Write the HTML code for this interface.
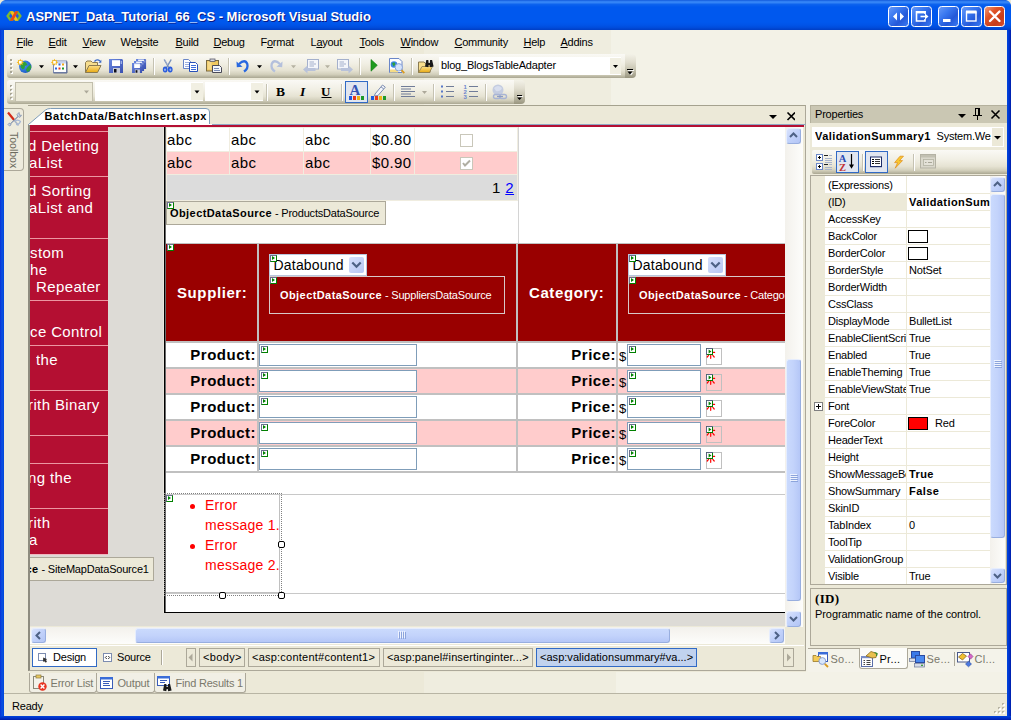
<!DOCTYPE html>
<html>
<head>
<meta charset="utf-8">
<title>VS</title>
<style>
*{box-sizing:border-box;margin:0;padding:0}
html,body{width:1011px;height:720px;overflow:hidden;background:#ECE9D8;font-family:"Liberation Sans",sans-serif;font-size:11px;color:#000;letter-spacing:-0.2px}
.abs{position:absolute}
#win{position:absolute;left:0;top:0;width:1011px;height:720px;background:#ECE9D8;overflow:hidden}
/* window chrome */
#title{left:0;top:0;width:1011px;height:30px;background:linear-gradient(#0A50D4 0px,#2E7CF2 1px,#3484F6 2.5px,#0C62EE 4.5px,#0058EE 7px,#0058EE 22px,#0054E8 25px,#004CDC 27.5px,#003EC4 30px)}
#title .txt{left:26px;top:9px;color:#fff;font-weight:bold;font-size:13px;letter-spacing:0px;text-shadow:1px 1px 0 #0A1883;white-space:nowrap}
#bl{left:0;top:30px;width:4px;height:690px;background:linear-gradient(90deg,#0831D9,#0A50E0 50%,#0046DD)}
#br{left:1007px;top:30px;width:4px;height:690px;background:linear-gradient(90deg,#0046DD,#0035D0 50%,#001DA8)}
#bb{left:0;top:716px;width:1011px;height:4px;background:linear-gradient(#0046DD,#0030C8 50%,#001DA8)}
.tb{position:absolute;top:6px;width:21px;height:21px;border:1px solid #fff;border-radius:3px;background:linear-gradient(135deg,#5C8DF0 0%,#2B62E0 40%,#2257D6 60%,#3C78EE 100%)}
.tb.close{background:linear-gradient(135deg,#EA8A6C 0%,#D9502E 40%,#C83A1A 70%,#D9502E 100%)}
/* menu */
#menu{left:4px;top:30px;width:1003px;height:24px;background:linear-gradient(90deg,#ECE9D8 0,#ECE9D8 420px,#EFEDDF 420px,#EFEDDF 607px,#F3F2E7 607px,#F3F2E7 100%)}
#menu span{position:absolute;top:6px;font-size:11px;white-space:nowrap;letter-spacing:-0.25px;margin-left:0.5px}
#menu u{text-decoration:underline}
/* toolbars */
#tbarea{left:4px;top:54px;width:1003px;height:52px;background:linear-gradient(90deg,#ECE9D8 0,#ECE9D8 420px,#EFEDDF 420px,#EFEDDF 607px,#F3F2E7 607px,#F3F2E7 100%)}
.toolbar{position:absolute;height:24px;border-radius:3px 0 0 3px;background:linear-gradient(#FAF9F5 0,#F1EFE4 40%,#E6E3D3 68%,#D2CFBB 85%,#B5B29D 96%,#A8A590 100%)}
.ovf{position:absolute;top:0;width:11px;height:24px;border-radius:0 4px 4px 0;background:linear-gradient(#F3F2E8 0,#E0DDCE 35%,#C6C3B0 65%,#98957F 100%)}
.grip{position:absolute;left:3px;top:5px;width:3px;height:15px;background:repeating-linear-gradient(#fff 0 1px,#A6A394 1px 3px,transparent 3px 4px)}
.sep{position:absolute;top:4px;width:2px;height:17px;border-left:1px solid #C5C2B2;border-right:1px solid #fff}

/* doc frame */
#docwrap{left:4px;top:106px;width:802px;height:566px;background:#ECE9D8}
#gap{left:806px;top:105px;width:4px;height:567px;background:#F3F2E7}
#toolbox{left:4px;top:108px;width:20px;height:63px;background:#EEEBDD;border:1px solid #ACA899;border-left:none;border-radius:0 4px 4px 0}
#toolbox .t{position:absolute;left:3.5px;top:23px;font-size:10.5px;color:#6D6B5F;writing-mode:vertical-rl;letter-spacing:0px}
#tabstrip{left:28px;top:105px;width:778px;height:20px;background:#ECE9D8;border-top:1px solid #A5A28F;border-right:1px solid #ACA899;border-bottom:1px solid #8FA8C4}
#docframe{left:28px;top:124px;width:778px;height:547px;border:1px solid #ACA899;border-top-color:#8FA8C4;border-left:2px solid #8E8C7F;background:#ECE9D8}
#doc{left:30px;top:125px;width:755px;height:501px;background:#DDDBD6;overflow:hidden}
#sc{left:-30px;top:-125px;width:1011px;height:720px}
.vd{font-family:"Liberation Sans",sans-serif}
#side{left:30px;top:125px;width:78px;height:429px;background:#B40F32}
.it{position:absolute;color:#fff;font-size:15px;letter-spacing:0.38px;line-height:17px;white-space:nowrap;overflow:hidden}
.ln{position:absolute;left:30px;width:78px;height:1px;background:#EC96A2}
#page{left:164px;top:125px;width:621px;height:488px;background:#fff;border-left:1px solid #000;border-bottom:1px solid #000;box-shadow:inset 1px 0 0 #6A6A6A,-1px 0 0 #EAE7E0}

.vt{font-size:15px;letter-spacing:0.4px;white-space:nowrap;line-height:20px}
.hd{font-size:15px;letter-spacing:0.6px;font-weight:bold;color:#fff;white-space:nowrap;line-height:20px}
.lb{font-size:15px;letter-spacing:0.5px;font-weight:bold;color:#000;white-space:nowrap;line-height:20px;text-align:right}
.ods{background:#ECE9D8;border:1px solid #ACA899;font-size:11px;white-space:nowrap;overflow:hidden;letter-spacing:-0.2px}
.odsr{border:1px solid #D8C8C8;font-size:11px;white-space:nowrap;color:#fff;overflow:hidden;letter-spacing:-0.2px}
.txb{background:#fff;border:1px solid #7F9DB9}
.ddb{position:absolute;left:79px;top:2px;width:15px;height:16px;background:linear-gradient(135deg,#D6DFFB,#B7C7F3);border-radius:2px}
.glyph{position:absolute;width:7px;height:7px;background:#fff;border:1px solid;border-color:#6C7090 #008000 #008000 #6C7090}
.glyph:after{content:"";position:absolute;left:1px;top:0px;border-left:3px solid #008000;border-top:2.5px solid transparent;border-bottom:2.5px solid transparent}

/* scrollbars */
.vtrack{position:absolute;background:linear-gradient(90deg,#F3F1EC,#FDFDFB)}
.htrack{position:absolute;background:linear-gradient(#F3F1EC,#FDFDFB)}
.sbtn{position:absolute;width:15px;height:15px;border-radius:3px;border:1px solid #fff;background:linear-gradient(135deg,#D9E2FC 0%,#C3D3FB 45%,#B3C5F5 100%);box-shadow:1px 1px 0 #9DB3E8 inset,0 0 0 0 #000}
.sbtn{box-shadow:none;border-color:#E6EDFD #98AEDF #98AEDF #E6EDFD}
.sbtn svg{position:absolute;left:0;top:0}
.thumb{position:absolute;border-radius:3px;border:1px solid;border-color:#E6EDFD #98AEDF #98AEDF #E6EDFD;background:#C3D3FB}
.thumb.v{background:linear-gradient(90deg,#CADAFD 0%,#C3D3FB 50%,#B5C7F7 100%)}
.thumb.h{background:linear-gradient(#CADAFD 0%,#C3D3FB 50%,#B5C7F7 100%)}
/* design/source bar */
#dsbar{left:30px;top:645px;width:774px;height:25px;background:#ECE9D8;border-top:1px solid #fff}
.pbtn{position:absolute;top:648px;height:19px;border:1px solid #ACA899;font-size:11px;white-space:nowrap;padding:2px 0 0 3px;background:#ECE9D8}
.pbtn.sel{background:#C1D2EE;border-color:#316AC5}
/* bottom tabs */
#btabs{left:4px;top:672px;width:1003px;height:22px;background:linear-gradient(90deg,#ECE9D8 0,#ECE9D8 420px,#EFEDDF 420px,#EFEDDF 612px,#F3F2E7 612px,#F3F2E7 100%)}
.btab{position:absolute;top:673px;height:20px;border:1px solid #ACA899;border-top:none;border-radius:0 0 3px 3px;background:#F1EFE5;color:#7A786B;font-size:11px;white-space:nowrap}
.btab span{position:absolute;left:21px;top:4px}
#status{left:4px;top:693px;width:1003px;height:23px;background:#ECE9D8;border-top:1px solid #B8B5A4}
#status .t{position:absolute;left:8px;top:6px;font-size:11px}

/* properties */
#props{left:810px;top:105px;width:197px;height:542px;background:#ECE9D8}
#ptitle{left:810px;top:105px;width:197px;height:18px;background:#CAC7B3;border-top:1px solid #B4B19D;border-left:1px solid #B4B19D;font-size:11px}
#ptitle span{position:absolute;left:4px;top:2px}
#pcombo{left:812px;top:127px;width:192px;height:20px;background:#fff;overflow:hidden;white-space:nowrap;font-size:11px}
#pcombo .t{position:absolute;left:3px;top:3px;width:176px;overflow:hidden;display:block}
#pcombo .b{position:absolute;left:180px;top:1px;width:12px;height:18px;background:linear-gradient(90deg,#ECE9D8 0 11px,#fff 11px)}
#ptool{left:812px;top:150px;width:195px;height:24px;border-radius:2px 0 0 2px;background:linear-gradient(#FAF9F5 0,#F1EFE4 40%,#E6E3D3 68%,#D2CFBB 85%,#B5B29D 96%,#A8A590 100%)}
#pgridb{left:810px;top:175px;width:197px;height:410px;border:1px solid #ACA899;background:#ECE9D8}
#pgrid{left:812px;top:176px;width:193px;height:408px;background:#fff;overflow:hidden}
#pgrid .gut{position:absolute;left:0;top:0;width:13px;height:408px;background:#ECE9D8}
.pr{position:absolute;left:13px;width:166px;height:17px;border-bottom:1px solid #ECE9D8;font-size:11px;white-space:nowrap;letter-spacing:-0.2px}
.pr b,#pcombo b,.ods b,.odsr b{letter-spacing:0.42px}
.pr .n{position:absolute;left:0;top:0;width:81px;height:16px;overflow:hidden;padding:2px 0 0 3px}
.pr .v{position:absolute;left:82px;top:0;width:84px;height:16px;overflow:hidden;padding:2px 0 0 2px}
.pr .sw{position:absolute;left:83px;top:2px;width:20px;height:13px;border:1px solid #000}
#pvl{position:absolute;left:94px;top:0;width:1px;height:408px;background:#ECE9D8}
#pdesc{left:810px;top:588px;width:197px;height:58px;letter-spacing:-0.08px;background:#ECE9D8;border:1px solid #ACA899;font-size:11px}
#ptabs{left:808px;top:648px;width:199px;height:24px;background:#F4F3EA;border-top:1px solid #ACA899}
.ptab{position:absolute;top:648px;height:21px;font-size:11px;color:#7A786B;white-space:nowrap;letter-spacing:0.25px}
.ptab span{position:absolute;left:17.5px;top:5px}
.ptab.act span{left:19.5px;top:5px}
.ptab.act{background:#FCFCF9;border:1px solid #ACA899;border-top:none;border-radius:0 0 3px 3px;color:#000;top:648px;height:21px}
/* doc tab */
#dtab{left:30px;top:108px;width:181px;height:17px}
#dtab .t{position:absolute;left:14.5px;top:2px;font-size:11px;font-weight:bold;white-space:nowrap;letter-spacing:0.63px}
</style>
</head>
<body>
<div id="win">

  <div id="title" class="abs">
    <!--VSICON-->
    <div class="txt abs">ASPNET_Data_Tutorial_66_CS - Microsoft Visual Studio</div>
    <!--TBTNS-->
  </div>
  <div id="menu" class="abs"><span style="left:12px"><u>F</u>ile</span><span style="left:44px"><u>E</u>dit</span><span style="left:78px"><u>V</u>iew</span><span style="left:116px">We<u>b</u>site</span><span style="left:171px"><u>B</u>uild</span><span style="left:209px"><u>D</u>ebug</span><span style="left:256px">F<u>o</u>rmat</span><span style="left:306px">L<u>a</u>yout</span><span style="left:355px"><u>T</u>ools</span><span style="left:396px"><u>W</u>indow</span><span style="left:450px"><u>C</u>ommunity</span><span style="left:519px"><u>H</u>elp</span><span style="left:556px"><u>A</u>ddins</span></div>
  <div id="tbarea" class="abs">
    <div class="toolbar" style="left:3px;top:0;width:618px"></div>
    <div class="ovf" style="left:621px;top:0"></div>
    <div class="toolbar" style="left:3px;top:26px;width:507px"></div>
    <div class="ovf" style="left:510px;top:26px"></div>
  </div>
<svg class="abs" style="left:0;top:54px" width="640" height="52" viewBox="0 54 640 52" shape-rendering="auto">
<defs>
<linearGradient id="gFold" x1="0" y1="0" x2="0" y2="1"><stop offset="0" stop-color="#FBE08A"/><stop offset="1" stop-color="#E8A912"/></linearGradient>
<linearGradient id="gBlue" x1="0" y1="0" x2="1" y2="1"><stop offset="0" stop-color="#6A88E0"/><stop offset="1" stop-color="#3A50B0"/></linearGradient>
<radialGradient id="gGlobe" cx="0.35" cy="0.35" r="0.8"><stop offset="0" stop-color="#4C9AF5"/><stop offset="1" stop-color="#1450C0"/></radialGradient>
<g id="star"><path d="M3.5 0 L4.4 1.6 L6 0.9 L5.6 2.6 L7.2 3.5 L5.6 4.4 L6 6.1 L4.4 5.4 L3.5 7 L2.6 5.4 L1 6.1 L1.4 4.4 L-0.2 3.5 L1.4 2.6 L1 0.9 L2.6 1.6 Z" fill="#F5B81C"/><rect x="2.2" y="2.2" width="2.6" height="2.6" fill="#fff"/></g>
<g id="dd"><path d="M0 0 L5 0 L2.5 3 Z"/></g>
<g id="floppy"><path d="M0 0 L13 0 L14 1 L14 14 L0 14 Z" fill="url(#gBlue)"/><rect x="3" y="1" width="8" height="6" fill="#fff"/><rect x="3" y="1" width="8" height="1" fill="#DCE4F8"/><rect x="4" y="9" width="7" height="5" fill="#C8CCD8"/><rect x="5" y="10" width="2.5" height="3.5" fill="#101018"/><rect x="11.7" y="2" width="1.2" height="3" fill="#A8B8E8"/></g>
</defs>
<!-- grip -->
<g fill="#A9A697"><rect x="10" y="59" width="2" height="2"/><rect x="10" y="63" width="2" height="2"/><rect x="10" y="67" width="2" height="2"/><rect x="10" y="71" width="2" height="2"/></g>
<g fill="#fff"><rect x="11" y="60" width="2" height="2"/><rect x="11" y="64" width="2" height="2"/><rect x="11" y="68" width="2" height="2"/><rect x="11" y="72" width="2" height="2"/></g>
<g fill="#A9A697"><rect x="10" y="59" width="2" height="2"/><rect x="10" y="63" width="2" height="2"/><rect x="10" y="67" width="2" height="2"/><rect x="10" y="71" width="2" height="2"/></g>
<!-- new website: globe+star -->
<circle cx="25.3" cy="66.8" r="6.2" fill="url(#gGlobe)"/>
<path d="M21 63 Q24 61 26 62.5 L27.5 65 L25 66 L24.5 68.5 L22.5 69.5 L20.5 67 Z M27.5 67 L30.5 64.5 L31.3 67.5 L29.5 71 L27 72 L26 69.5 Z" fill="#2FA03C"/>
<use href="#star" x="16.8" y="58.8"/>
<use href="#dd" x="39" y="65.3" fill="#000"/>
<!-- add item -->
<rect x="53.5" y="61" width="13" height="11.5" fill="#FDFDFE" stroke="#7D8CB4" stroke-width="1"/>
<rect x="54" y="61.5" width="12" height="2" fill="#C9D5F0"/>
<path d="M53.5 73 L67 73 L67 61.5" stroke="#5A6890" stroke-width="1" fill="none"/>
<rect x="58.5" y="63.5" width="2" height="2" fill="#2A66E0"/><rect x="62" y="63.5" width="2" height="2" fill="#F0A818"/>
<rect x="55" y="67.5" width="2" height="2" fill="#2A66E0"/><rect x="58.5" y="67.5" width="2" height="2" fill="#E8381C"/><rect x="62" y="67.5" width="2" height="2" fill="#1E9A2A"/>
<use href="#star" x="51" y="58.8"/>
<use href="#dd" x="73" y="65.3" fill="#000"/>
<!-- open folder -->
<path d="M85.5 72.5 L85.5 62.5 L87 61 L91 61 L92.5 62.5 L97.5 62.5 L97.5 65" fill="#F7DE8E" stroke="#8A7A50" stroke-width="1"/>
<path d="M85.5 72.5 L89 65.5 L101 65.5 L97.5 72.5 Z" fill="url(#gFold)" stroke="#8A7A50" stroke-width="1"/>
<path d="M94.5 61.5 Q97 58.5 100 61" stroke="#3A6AC8" stroke-width="1.3" fill="none"/><path d="M98.5 62.8 L101.3 62.8 L101.3 59.8 Z" fill="#3A6AC8"/>
<!-- save -->
<use href="#floppy" x="109" y="59"/>
<!-- save all -->
<g transform="translate(136,59) scale(0.72)"><use href="#floppy"/></g>
<g transform="translate(134,61) scale(0.72)"><use href="#floppy"/></g>
<g transform="translate(132,63) scale(0.72)"><use href="#floppy"/></g>
<!-- sep -->
<g id="s1"><rect x="153" y="58" width="1" height="17" fill="#C5C2B2"/><rect x="154" y="58" width="1" height="17" fill="#fff"/></g>
<!-- scissors -->
<path d="M164.2 59.5 L168.8 67.5 M171.2 59.5 L166.6 67.5" stroke="#7A92BC" stroke-width="1.5" fill="none"/>
<path d="M164.6 59.5 L167.7 65" stroke="#A8B8D4" stroke-width="0.8" fill="none"/>
<ellipse cx="165.2" cy="69.6" rx="2.4" ry="3" fill="#2A5CDC"/><ellipse cx="165" cy="69.8" rx="0.9" ry="1.3" fill="#9CB8F0"/>
<ellipse cx="170.2" cy="69.6" rx="2.4" ry="3" fill="#2A5CDC"/><ellipse cx="170.4" cy="69.8" rx="0.9" ry="1.3" fill="#9CB8F0"/>
<!-- copy -->
<path d="M183.5 59.5 L188.5 59.5 L190.5 61.5 L190.5 68.5 L183.5 68.5 Z" fill="#fff" stroke="#6A86C8" stroke-width="1"/>
<path d="M185 62.5 L189 62.5 M185 64.5 L189 64.5 M185 66.5 L189 66.5" stroke="#9CB0E0" stroke-width="1"/>
<path d="M189.5 62.5 L195.5 62.5 L197.5 64.5 L197.5 71.5 L189.5 71.5 Z" fill="#fff" stroke="#2850B8" stroke-width="1"/>
<path d="M191 65.5 L196 65.5 M191 67.5 L196 67.5 M191 69.5 L196 69.5" stroke="#3A6AD8" stroke-width="1"/>
<!-- paste -->
<rect x="206.5" y="60.5" width="12" height="10.5" fill="#F0C860" stroke="#7A6A40" stroke-width="1"/><rect x="207.5" y="61.5" width="4" height="8" fill="#F8E098" opacity="0.7"/>
<rect x="210" y="59" width="5" height="2.5" fill="#D8D8E0" stroke="#5A5A68" stroke-width="0.8"/>
<path d="M212.5 65.5 L219.5 65.5 L221.5 67.5 L221.5 72.5 L212.5 72.5 Z" fill="#F4F6FA" stroke="#4A4A58" stroke-width="1"/>
<path d="M214 68.5 L219 68.5 M214 70.5 L220 70.5" stroke="#7A8CB8" stroke-width="1"/>
<use href="#s1" x="75"/>
<!-- undo -->
<path d="M239 64 Q245 58.5 247.3 64 Q248.5 68.5 244 71.5" stroke="#2868E0" stroke-width="2.3" fill="none"/>
<path d="M236.5 61.5 L236.8 67.2 L242.5 66.8 Z" fill="#2868E0"/>
<use href="#dd" x="257" y="65.3" fill="#000"/>
<!-- redo (disabled) -->
<path d="M280 64 Q274 58.5 271.7 64 Q270.5 68.5 275 71.5" stroke="#B4C0DC" stroke-width="2.3" fill="none"/>
<path d="M282.5 61.5 L282.2 67.2 L276.5 66.8 Z" fill="#B4C0DC"/>
<use href="#dd" x="291" y="65.3" fill="#B5B2A2"/>
<!-- nav back -->
<rect x="307.5" y="59.5" width="11" height="9.5" fill="#F4F6FA" stroke="#A4B0CC" stroke-width="1"/>
<path d="M309.5 62 L314 62 M309.5 64 L316 64 M309.5 66 L314 66" stroke="#A4B0CC" stroke-width="1"/>
<path d="M303 69.5 L307.5 65.5 L307.5 68 L315.5 68 L315.5 71 L307.5 71 L307.5 73.5 Z" fill="#B8C2DA"/>
<use href="#dd" x="325" y="65.3" fill="#B5B2A2"/>
<!-- nav fwd -->
<rect x="337.5" y="59.5" width="11" height="9.5" fill="#F4F6FA" stroke="#A4B0CC" stroke-width="1"/>
<path d="M339.5 62 L344 62 M339.5 64 L346 64 M339.5 66 L344 66" stroke="#A4B0CC" stroke-width="1"/>
<path d="M353 69.5 L348.5 65.5 L348.5 68 L341 68 L341 71 L348.5 71 L348.5 73.5 Z" fill="#B8C2DA"/>
<use href="#s1" x="206"/>
<!-- start -->
<path d="M371 59.5 L377.3 65.3 L371 71.2 Z" fill="#1E9A1E" stroke="#0E7A12" stroke-width="0.6"/>
<!-- view in browser -->
<path d="M389.5 58.5 L399 58.5 L402 61.5 L402 72.5 L389.5 72.5 Z" fill="#FDFDFE" stroke="#6A86C8" stroke-width="1"/>
<rect x="390" y="69.5" width="8" height="3" fill="#F6DC86"/>
<circle cx="394" cy="64.5" r="3.3" fill="#3A86E8"/><path d="M392 63 L394.5 62.3 L395.5 64.5 L393.5 66.5 Z" fill="#2FA03C"/>
<circle cx="398.8" cy="67.3" r="3.7" fill="#D4E2FA" stroke="#8AA4D8" stroke-width="1"/>
<path d="M401.5 70.2 L404.3 73.2" stroke="#D89A20" stroke-width="1.8"/>
<use href="#s1" x="258"/>
<!-- find in files -->
<path d="M418.5 72.5 L418.5 62 L424 62 L425.5 63.5 L430 63.5 L430 72.5 Z" fill="#F7DE8E" stroke="#8A7A50" stroke-width="1"/>
<path d="M418.5 72.5 L422 66.5 L432.5 66.5 L429.5 72.5 Z" fill="url(#gFold)" stroke="#8A7A50" stroke-width="0.8"/>
<path d="M425 66.5 L426.3 60 L428.3 60 L428.6 63 L429.8 63 L430.1 60 L432.1 60 L433.6 66.5 L430.2 67.3 L429.7 65 L428.7 65 L428.2 67.3 Z" fill="#181818"/>
<!-- combo -->
<rect x="439" y="57" width="182" height="18" fill="#fff"/>
<rect x="610" y="58" width="11" height="16" fill="#F1EFE2"/>
<path d="M613 65 L618 65 L615.5 68 Z" fill="#000"/>
<!-- overflow 1 -->
<path d="M628 70.5 L634 70.5" stroke="#fff" stroke-width="1" opacity="0.9"/><path d="M628.5 72.5 L633.5 72.5 L631 75.5 Z" fill="#fff" opacity="0.9"/><path d="M627 69.5 L633 69.5" stroke="#000" stroke-width="1"/><path d="M627.5 71.5 L632.5 71.5 L630 74.5 Z" fill="#000"/>
</svg>

<svg class="abs" style="left:0;top:80px" width="540" height="26" viewBox="0 80 540 26">
<g fill="#A9A697"><rect x="10" y="85" width="2" height="2"/><rect x="10" y="89" width="2" height="2"/><rect x="10" y="93" width="2" height="2"/><rect x="10" y="97" width="2" height="2"/></g>
<g fill="#fff"><rect x="11" y="86" width="2" height="2"/><rect x="11" y="90" width="2" height="2"/><rect x="11" y="94" width="2" height="2"/><rect x="11" y="98" width="2" height="2"/></g>
<g fill="#A9A697"><rect x="10" y="85" width="1.5" height="1.5"/><rect x="10" y="89" width="1.5" height="1.5"/><rect x="10" y="93" width="1.5" height="1.5"/><rect x="10" y="97" width="1.5" height="1.5"/></g>
<!-- combos -->
<rect x="15.5" y="82.5" width="77" height="19" fill="#ECE9D8" stroke="#C1BEAC" stroke-width="1"/>
<path d="M84 90.5 L89 90.5 L86.5 93.5 Z" fill="#ACA899"/>
<rect x="95" y="82" width="108" height="19" fill="#fff"/>
<rect x="191" y="83" width="12" height="17" fill="#F1EFE2"/>
<path d="M194.5 90.5 L199.5 90.5 L197 93.5 Z" fill="#000"/>
<rect x="205" y="82" width="58" height="19" fill="#fff"/>
<rect x="251" y="83" width="12" height="17" fill="#F1EFE2"/>
<path d="M254.5 90.5 L259.5 90.5 L257 93.5 Z" fill="#000"/>
<g id="s2"><rect x="266" y="84" width="1" height="17" fill="#C5C2B2"/><rect x="267" y="84" width="1" height="17" fill="#fff"/></g>
<!-- B I U -->
<text x="276" y="95.7" font-family="Liberation Serif" font-weight="bold" font-size="13.5" fill="#000">B</text>
<text x="300" y="95.7" font-family="Liberation Serif" font-weight="bold" font-style="italic" font-size="13.5" fill="#000">I</text>
<text x="321" y="95.5" font-family="Liberation Serif" font-weight="bold" font-size="13" fill="#000">U</text>
<rect x="321.5" y="97" width="10" height="1" fill="#000"/>
<use href="#s2" x="75"/>
<!-- fore color selected -->
<rect x="345.5" y="81.5" width="22" height="21" fill="#E1E6F0" stroke="#316AC5" stroke-width="1"/>
<text x="349.5" y="95" font-family="Liberation Serif" font-weight="bold" font-size="15" fill="#3454B4">A</text>
<rect x="349" y="96" width="3" height="4" fill="#1C5AE0"/><rect x="353" y="96" width="3" height="4" fill="#E8381C"/><rect x="357" y="96" width="3" height="4" fill="#F0B414"/><rect x="361" y="96" width="3" height="4" fill="#1E9A2A"/>
<!-- highlighter -->
<path d="M375 94 L382.5 85 L385.3 87.2 L378 95.5 L374.5 96 Z" fill="#F4F6FA" stroke="#7C8CB0" stroke-width="1"/>
<path d="M381 86.8 L383.8 89" stroke="#7C8CB0" stroke-width="1"/>
<rect x="371" y="96" width="3" height="4" fill="#1C5AE0"/><rect x="375" y="96" width="3" height="4" fill="#E8381C"/><rect x="379" y="96" width="3" height="4" fill="#F0B414"/><rect x="383" y="96" width="3" height="4" fill="#1E9A2A"/>
<use href="#s2" x="127"/>
<!-- align -->
<path d="M401 86.5 L415 86.5 M401 89 L411 89 M401 91.5 L415 91.5 M401 94 L411 94 M401 96.5 L415 96.5" stroke="#707C98" stroke-width="1"/>
<path d="M422 91 L427 91 L424.5 94 Z" fill="#ACA899"/>
<use href="#s2" x="167"/>
<!-- bullets -->
<g fill="#5878C8"><rect x="441" y="85.5" width="2" height="2"/><rect x="441" y="90.5" width="2" height="2"/><rect x="441" y="95.5" width="2" height="2"/></g>
<path d="M446 86.5 L454 86.5 M446 91.5 L454 91.5 M446 96.5 L454 96.5" stroke="#707C98" stroke-width="1.2"/>
<!-- numbering -->
<g font-family="Liberation Sans" font-size="6" font-weight="bold" fill="#6A84CC"><text x="463.5" y="88.5">1</text><text x="463.5" y="93.8">2</text><text x="463.5" y="99">3</text></g>
<path d="M469 86.5 L478 86.5 M469 91.5 L478 91.5 M469 96.5 L478 96.5" stroke="#707C98" stroke-width="1.2"/>
<use href="#s2" x="219"/>
<!-- hyperlink disabled -->
<circle cx="498" cy="90" r="5.5" fill="#C4CCE0"/>
<path d="M494 88 Q498 84 502 88 Q500 92 496 91 Z" fill="#D8DEEE"/>
<rect x="493.5" y="94.5" width="7" height="4" rx="2" fill="none" stroke="#A8B4D4" stroke-width="1.4"/>
<rect x="499.5" y="94.5" width="7" height="4" rx="2" fill="none" stroke="#A8B4D4" stroke-width="1.4"/>
<path d="M497 96.5 L503 96.5" stroke="#8C9CC4" stroke-width="1.2"/>
<!-- overflow 2 -->
<path d="M517 95.5 L522 95.5" stroke="#000" stroke-width="1"/><path d="M517 97.5 L522 97.5 L519.5 100 Z" fill="#000"/>
<path d="M518 96.5 L523 96.5" stroke="#fff" stroke-width="1" opacity="0.9"/>
</svg>

  <div class="abs" style="left:441px;top:59px;font-size:11px;white-space:nowrap">blog_BlogsTableAdapter</div>


  <div id="docwrap" class="abs"></div><div id="gap" class="abs"></div>
  <div id="toolbox" class="abs"><svg width="16" height="17" style="position:absolute;left:2px;top:2px"><path d="M2 1.5 L8.5 9.5" stroke="#D42A18" stroke-width="2.2"/><path d="M8 9 L12.5 14.5" stroke="#A8B4C8" stroke-width="1.6"/><path d="M13 1.5 L11 3.5 L11.8 5.2 L4.5 12.5 L3 12.2 L2 13.5 L3.5 15 L5 14 L4.8 12.8 L12.3 5.7 L14 6.3 L15.5 4.2 L13.5 4.3 Z" fill="#C8D4E8" stroke="#7C8CA8" stroke-width="0.7"/><path d="M9 10 Q12 8 14.5 10.5 Q13 14 10 13.5" fill="none" stroke="#A8B8D4" stroke-width="1.2"/></svg><div class="t">Toolbox</div></div>
  <div id="tabstrip" class="abs"></div>
  <div id="docframe" class="abs"></div>
  <div id="doc" class="abs"><div id="sc" class="abs">
    <div id="side" class="abs"></div>
    <div id="page" class="abs"></div>
    
<div class="ln" style="top:131px"></div>
<div class="ln" style="top:176px"></div>
<div class="ln" style="top:238px"></div>
<div class="ln" style="top:300px"></div>
<div class="ln" style="top:345px"></div>
<div class="ln" style="top:390px"></div>
<div class="ln" style="top:435px"></div>
<div class="ln" style="top:463px"></div>
<div class="ln" style="top:508px"></div>
<div class="it" style="left:28px;top:137px">d Deleting</div>
<div class="it" style="left:29px;top:154px">aList</div>
<div class="it" style="left:28px;top:182px">d Sorting</div>
<div class="it" style="left:29px;top:199px">aList and</div>
<div class="it" style="left:30px;top:244px">stom</div>
<div class="it" style="left:30px;top:261px">he</div>
<div class="it" style="left:36px;top:278px">Repeater</div>
<div class="it" style="left:30px;top:323px">ce Control</div>
<div class="it" style="left:36px;top:351px">the</div>
<div class="it" style="left:28px;top:396px">rith Binary</div>
<div class="it" style="left:28px;top:469px">ng the</div>
<div class="it" style="left:28px;top:514px">rith</div>
<div class="it" style="left:29px;top:531px">a</div>
<div class="abs" style="left:30px;top:554px;width:78px;height:1px;background:#F0B8BF"></div>
<div class="abs ods" style="left:20px;top:557px;width:134px;height:24px"><span style="position:absolute;left:4.5px;top:5px"><b>ce</b> - SiteMapDataSource1</span></div>
<div class="abs" style="left:166px;top:127px;width:352px;height:74px;background:#F0EDE0"></div>
<div class="abs" style="left:167px;top:128px;width:62px;height:23px;background:#fff"></div>
<div class="abs" style="left:230px;top:128px;width:73px;height:23px;background:#fff"></div>
<div class="abs" style="left:304px;top:128px;width:66px;height:23px;background:#fff"></div>
<div class="abs" style="left:371px;top:128px;width:43px;height:23px;background:#fff"></div>
<div class="abs" style="left:415px;top:128px;width:102px;height:23px;background:#fff"></div>
<div class="abs vt" style="left:167px;top:130px">abc</div>
<div class="abs vt" style="left:231px;top:130px">abc</div>
<div class="abs vt" style="left:305px;top:130px">abc</div>
<div class="abs vt" style="left:372px;top:130px">$0.80</div>
<div class="abs" style="left:167px;top:152px;width:62px;height:22px;background:#FFCCCC"></div>
<div class="abs" style="left:230px;top:152px;width:73px;height:22px;background:#FFCCCC"></div>
<div class="abs" style="left:304px;top:152px;width:66px;height:22px;background:#FFCCCC"></div>
<div class="abs" style="left:371px;top:152px;width:43px;height:22px;background:#FFCCCC"></div>
<div class="abs" style="left:415px;top:152px;width:102px;height:22px;background:#FFCCCC"></div>
<div class="abs vt" style="left:167px;top:153px">abc</div>
<div class="abs vt" style="left:231px;top:153px">abc</div>
<div class="abs vt" style="left:305px;top:153px">abc</div>
<div class="abs vt" style="left:372px;top:153px">$0.90</div>
<div class="abs" style="left:167px;top:175px;width:350px;height:25px;background:#DCDCDC"></div>
<div class="abs vt" style="left:492px;top:178px">1 <span style="color:#0000FF;text-decoration:underline">2</span></div>
<div class="abs" style="left:460px;top:134px;width:13px;height:13px;background:#fff;border:1px solid #C9C7BA"></div>
<div class="abs" style="left:460px;top:157px;width:13px;height:13px;background:#fff;border:1px solid #C9C7BA"><svg width="11" height="11" style="position:absolute;left:0;top:0"><path d="M2 5 L4 7.5 L9 2.5" stroke="#B0AEA2" stroke-width="2" fill="none"/></svg></div>
<div class="abs" style="left:518px;top:127px;width:1px;height:116px;background:#D4D4D4"></div>
<div class="abs ods" style="left:166px;top:201px;width:220px;height:24px"><span style="position:absolute;left:3px;top:5px"><b>ObjectDataSource</b> - ProductsDataSource</span></div>
<div class="glyph" style="left:167px;top:202px"></div><div class="abs" style="left:166px;top:243px;width:640px;height:230px;background:#C0C0C0"></div>
<div class="abs" style="left:166px;top:244px;width:91px;height:97px;background:#990000"></div>
<div class="abs" style="left:259px;top:244px;width:257px;height:97px;background:#990000"></div>
<div class="abs" style="left:518px;top:244px;width:98px;height:97px;background:#990000"></div>
<div class="abs" style="left:618px;top:244px;width:182px;height:97px;background:#990000"></div>
<div class="abs hd" style="left:177px;top:283px">Supplier:</div>
<div class="abs hd" style="left:529px;top:283px">Category:</div>
<div class="abs" style="left:269px;top:254px;width:98px;height:22px;background:#fff;border:1px solid #B9C7DD"><span class="vt" style="position:absolute;left:3.5px;top:0px;font-size:14px;letter-spacing:0.2px">Databound</span><div class="ddb"><svg width="15" height="16"><path d="M3.3 5.5 L7.5 9.8 L11.7 5.5" stroke="#4D6185" stroke-width="2.2" fill="none"/></svg></div></div>
<div class="glyph" style="left:270px;top:255px"></div><div class="abs" style="left:628px;top:254px;width:98px;height:22px;background:#fff;border:1px solid #B9C7DD"><span class="vt" style="position:absolute;left:3.5px;top:0px;font-size:14px;letter-spacing:0.2px">Databound</span><div class="ddb"><svg width="15" height="16"><path d="M3.3 5.5 L7.5 9.8 L11.7 5.5" stroke="#4D6185" stroke-width="2.2" fill="none"/></svg></div></div>
<div class="glyph" style="left:629px;top:255px"></div><div class="abs odsr" style="left:269px;top:276px;width:236px;height:38px"><span style="position:absolute;left:10px;top:12px"><b>ObjectDataSource</b> - SuppliersDataSource</span></div>
<div class="abs odsr" style="left:628px;top:276px;width:236px;height:38px"><span style="position:absolute;left:10px;top:12px"><b>ObjectDataSource</b> - CategoriesDataSource</span></div>
<div class="glyph" style="left:270px;top:277px"></div><div class="glyph" style="left:629px;top:277px"></div><div class="glyph" style="left:167px;top:244px"></div><div class="abs" style="left:166px;top:343px;width:91px;height:24px;background:#fff"></div>
<div class="abs" style="left:259px;top:343px;width:257px;height:24px;background:#fff"></div>
<div class="abs" style="left:518px;top:343px;width:98px;height:24px;background:#fff"></div>
<div class="abs" style="left:618px;top:343px;width:182px;height:24px;background:#fff"></div>
<div class="abs lb" style="left:166px;top:345px;width:90px">Product:</div>
<div class="abs lb" style="left:518px;top:345px;width:98px">Price:</div>
<div class="abs txb" style="left:259px;top:344px;width:158px;height:22px"></div>
<div class="glyph" style="left:261px;top:346px"></div><div class="abs vt" style="left:619px;top:347px;font-size:13px">$</div>
<div class="abs txb" style="left:627px;top:344px;width:74px;height:22px"></div>
<div class="glyph" style="left:629px;top:346px"></div><svg class="abs" style="left:706px;top:348px" width="17" height="18"><rect x="0.5" y="0.5" width="15" height="16" fill="none" stroke="#C0C0C0"/><path d="M4.7 6 L4.7 10.3 M2.6 7.4 L1.2 9 M6.8 7.4 L8.2 9 M7.3 4.4 L8.6 4.4" stroke="#FF0000" stroke-width="1.2" stroke-linecap="round"/><rect x="0.5" y="0.5" width="6" height="6" fill="#fff" stroke="#008000"/><path d="M0.5 7 L0.5 0.5 L7 0.5" fill="none" stroke="#5C6484"/><path d="M2.6 1.6 L2.6 5.4 L5.4 3.5 Z" fill="#008000"/></svg>
<div class="abs" style="left:166px;top:369px;width:91px;height:24px;background:#FFCCCC"></div>
<div class="abs" style="left:259px;top:369px;width:257px;height:24px;background:#FFCCCC"></div>
<div class="abs" style="left:518px;top:369px;width:98px;height:24px;background:#FFCCCC"></div>
<div class="abs" style="left:618px;top:369px;width:182px;height:24px;background:#FFCCCC"></div>
<div class="abs lb" style="left:166px;top:371px;width:90px">Product:</div>
<div class="abs lb" style="left:518px;top:371px;width:98px">Price:</div>
<div class="abs txb" style="left:259px;top:370px;width:158px;height:22px"></div>
<div class="glyph" style="left:261px;top:372px"></div><div class="abs vt" style="left:619px;top:373px;font-size:13px">$</div>
<div class="abs txb" style="left:627px;top:370px;width:74px;height:22px"></div>
<div class="glyph" style="left:629px;top:372px"></div><svg class="abs" style="left:706px;top:374px" width="17" height="18"><rect x="0.5" y="0.5" width="15" height="16" fill="none" stroke="#C0C0C0"/><path d="M4.7 6 L4.7 10.3 M2.6 7.4 L1.2 9 M6.8 7.4 L8.2 9 M7.3 4.4 L8.6 4.4" stroke="#FF0000" stroke-width="1.2" stroke-linecap="round"/><rect x="0.5" y="0.5" width="6" height="6" fill="#fff" stroke="#008000"/><path d="M0.5 7 L0.5 0.5 L7 0.5" fill="none" stroke="#5C6484"/><path d="M2.6 1.6 L2.6 5.4 L5.4 3.5 Z" fill="#008000"/></svg>
<div class="abs" style="left:166px;top:395px;width:91px;height:24px;background:#fff"></div>
<div class="abs" style="left:259px;top:395px;width:257px;height:24px;background:#fff"></div>
<div class="abs" style="left:518px;top:395px;width:98px;height:24px;background:#fff"></div>
<div class="abs" style="left:618px;top:395px;width:182px;height:24px;background:#fff"></div>
<div class="abs lb" style="left:166px;top:397px;width:90px">Product:</div>
<div class="abs lb" style="left:518px;top:397px;width:98px">Price:</div>
<div class="abs txb" style="left:259px;top:396px;width:158px;height:22px"></div>
<div class="glyph" style="left:261px;top:398px"></div><div class="abs vt" style="left:619px;top:399px;font-size:13px">$</div>
<div class="abs txb" style="left:627px;top:396px;width:74px;height:22px"></div>
<div class="glyph" style="left:629px;top:398px"></div><svg class="abs" style="left:706px;top:400px" width="17" height="18"><rect x="0.5" y="0.5" width="15" height="16" fill="none" stroke="#C0C0C0"/><path d="M4.7 6 L4.7 10.3 M2.6 7.4 L1.2 9 M6.8 7.4 L8.2 9 M7.3 4.4 L8.6 4.4" stroke="#FF0000" stroke-width="1.2" stroke-linecap="round"/><rect x="0.5" y="0.5" width="6" height="6" fill="#fff" stroke="#008000"/><path d="M0.5 7 L0.5 0.5 L7 0.5" fill="none" stroke="#5C6484"/><path d="M2.6 1.6 L2.6 5.4 L5.4 3.5 Z" fill="#008000"/></svg>
<div class="abs" style="left:166px;top:421px;width:91px;height:24px;background:#FFCCCC"></div>
<div class="abs" style="left:259px;top:421px;width:257px;height:24px;background:#FFCCCC"></div>
<div class="abs" style="left:518px;top:421px;width:98px;height:24px;background:#FFCCCC"></div>
<div class="abs" style="left:618px;top:421px;width:182px;height:24px;background:#FFCCCC"></div>
<div class="abs lb" style="left:166px;top:423px;width:90px">Product:</div>
<div class="abs lb" style="left:518px;top:423px;width:98px">Price:</div>
<div class="abs txb" style="left:259px;top:422px;width:158px;height:22px"></div>
<div class="glyph" style="left:261px;top:424px"></div><div class="abs vt" style="left:619px;top:425px;font-size:13px">$</div>
<div class="abs txb" style="left:627px;top:422px;width:74px;height:22px"></div>
<div class="glyph" style="left:629px;top:424px"></div><svg class="abs" style="left:706px;top:426px" width="17" height="18"><rect x="0.5" y="0.5" width="15" height="16" fill="none" stroke="#C0C0C0"/><path d="M4.7 6 L4.7 10.3 M2.6 7.4 L1.2 9 M6.8 7.4 L8.2 9 M7.3 4.4 L8.6 4.4" stroke="#FF0000" stroke-width="1.2" stroke-linecap="round"/><rect x="0.5" y="0.5" width="6" height="6" fill="#fff" stroke="#008000"/><path d="M0.5 7 L0.5 0.5 L7 0.5" fill="none" stroke="#5C6484"/><path d="M2.6 1.6 L2.6 5.4 L5.4 3.5 Z" fill="#008000"/></svg>
<div class="abs" style="left:166px;top:447px;width:91px;height:24px;background:#fff"></div>
<div class="abs" style="left:259px;top:447px;width:257px;height:24px;background:#fff"></div>
<div class="abs" style="left:518px;top:447px;width:98px;height:24px;background:#fff"></div>
<div class="abs" style="left:618px;top:447px;width:182px;height:24px;background:#fff"></div>
<div class="abs lb" style="left:166px;top:449px;width:90px">Product:</div>
<div class="abs lb" style="left:518px;top:449px;width:98px">Price:</div>
<div class="abs txb" style="left:259px;top:448px;width:158px;height:22px"></div>
<div class="glyph" style="left:261px;top:450px"></div><div class="abs vt" style="left:619px;top:451px;font-size:13px">$</div>
<div class="abs txb" style="left:627px;top:448px;width:74px;height:22px"></div>
<div class="glyph" style="left:629px;top:450px"></div><svg class="abs" style="left:706px;top:452px" width="17" height="18"><rect x="0.5" y="0.5" width="15" height="16" fill="none" stroke="#C0C0C0"/><path d="M4.7 6 L4.7 10.3 M2.6 7.4 L1.2 9 M6.8 7.4 L8.2 9 M7.3 4.4 L8.6 4.4" stroke="#FF0000" stroke-width="1.2" stroke-linecap="round"/><rect x="0.5" y="0.5" width="6" height="6" fill="#fff" stroke="#008000"/><path d="M0.5 7 L0.5 0.5 L7 0.5" fill="none" stroke="#5C6484"/><path d="M2.6 1.6 L2.6 5.4 L5.4 3.5 Z" fill="#008000"/></svg>
<div class="abs" style="left:166px;top:494px;width:640px;height:100px;border-top:1px solid #C8C8C8;border-bottom:1px solid #C8C8C8"></div>
<div class="abs" style="left:164px;top:493px;width:118px;height:103px;border:1px dotted #808080"></div>
<div class="abs" style="left:166px;top:495px;width:114px;height:98px;border:1px solid #C0C0C0;border-left:none;border-top:none"></div>
<div class="glyph" style="left:166px;top:495px"></div><div class="abs vt" style="left:205px;top:495px;color:#FF0000;font-size:14px;letter-spacing:0.25px">Error</div>
<div class="abs" style="left:190px;top:504px;width:5px;height:5px;border-radius:3px;background:#FF0000"></div>
<div class="abs vt" style="left:205px;top:515px;color:#FF0000;font-size:14px;letter-spacing:0.25px">message 1.</div>
<div class="abs vt" style="left:205px;top:535px;color:#FF0000;font-size:14px;letter-spacing:0.25px">Error</div>
<div class="abs" style="left:190px;top:544px;width:5px;height:5px;border-radius:3px;background:#FF0000"></div>
<div class="abs vt" style="left:205px;top:555px;color:#FF0000;font-size:14px;letter-spacing:0.25px">message 2.</div>
<div class="abs" style="left:278px;top:541px;width:7px;height:7px;background:#fff;border:1px solid #000;border-radius:2px"></div>
<div class="abs" style="left:219px;top:592px;width:7px;height:7px;background:#fff;border:1px solid #000;border-radius:2px"></div>
<div class="abs" style="left:278px;top:592px;width:7px;height:7px;background:#fff;border:1px solid #000;border-radius:2px"></div>

  </div></div>
  <!-- scrollbars -->
  <div class="abs" style="left:30px;top:125px;width:774px;height:2px;background:#B40F34;z-index:3"></div>
  <div class="vtrack" style="left:785px;top:127px;width:18px;height:500px"></div>
  <div class="sbtn" style="left:786px;top:128px;height:16px"><svg width="13" height="13" viewBox="0 0 13 13"><path d="M3 8 L6.5 4.5 L10 8" stroke="#4D6185" stroke-width="2" fill="none"/></svg></div>
  <div class="thumb v" style="left:786px;top:359px;width:15px;height:242px"><!--GV1--></div>
  <div class="sbtn" style="left:786px;top:611px;height:16px"><svg width="13" height="13" viewBox="0 0 13 13"><path d="M3 5 L6.5 8.5 L10 5" stroke="#4D6185" stroke-width="2" fill="none"/></svg></div>
  <div class="htrack" style="left:30px;top:627px;width:755px;height:17px"></div>
  <div class="sbtn" style="left:31px;top:628px"><svg width="13" height="13" viewBox="0 0 13 13"><path d="M8 3 L4.5 6.5 L8 10" stroke="#4D6185" stroke-width="2" fill="none"/></svg></div>
  <div class="thumb h" style="left:135px;top:628px;width:535px;height:15px"><!--GH1--></div>
  <div class="sbtn" style="left:769px;top:628px"><svg width="13" height="13" viewBox="0 0 13 13"><path d="M5 3 L8.5 6.5 L5 10" stroke="#4D6185" stroke-width="2" fill="none"/></svg></div>
  <div class="abs" style="left:785px;top:627px;width:18px;height:18px;background:#ECE9D8"></div>
  <!-- design/source -->
  <div id="dsbar" class="abs"></div>
  <div class="pbtn" style="left:32px;width:65px;background:#fff;border-color:#316AC5;padding-left:20px">Design</div>
  <div class="abs" style="left:117px;top:651px;font-size:11px">Source</div>
  <div class="abs" style="left:161px;top:650px;width:2px;height:15px;border-left:1px solid #ACA899;border-right:1px solid #fff"></div>
  <div class="pbtn" style="left:186px;width:10px"></div>
  <div class="pbtn" style="left:199px;width:46px;letter-spacing:0.35px">&lt;body&gt;</div>
  <div class="pbtn" style="left:248px;width:132px;letter-spacing:0.23px">&lt;asp:content#content1&gt;</div>
  <div class="pbtn" style="left:383px;width:150px;letter-spacing:0.12px">&lt;asp:panel#insertinginter...&gt;</div>
  <div class="pbtn sel" style="left:536px;width:161px;letter-spacing:0.03px">&lt;asp:validationsummary#va...&gt;</div>
  <div class="pbtn" style="left:783px;width:11px"></div>
  <!-- bottom tabs -->
  <div id="btabs" class="abs"></div>
  <div class="btab" style="left:29px;width:68px"><span style="left:20.5px">Error List</span></div>
  <div class="btab" style="left:96px;width:59px"><span style="left:20.5px">Output</span></div>
  <div class="btab" style="left:154px;width:92px"><span style="left:20.5px">Find Results 1</span></div>
  <div id="status" class="abs"><div class="t">Ready</div></div>
  <!-- doc tab -->
  <div id="dtab" class="abs">
    <svg width="184" height="17" style="position:absolute;left:-2px;top:0"><path d="M0 17 L0.5 16.5 L17.5 2 Q19.5 0.5 22.5 0.5 L178 0.5 Q181.5 0.5 181.5 4 L181.5 17 Z" fill="#fff" stroke="#7F9DB9" stroke-width="1"/><rect x="1" y="16" width="183" height="1" fill="#fff"/></svg>
    <div class="t">BatchData/BatchInsert.aspx</div>
  </div>
  <svg width="30" height="17" style="position:absolute;left:765px;top:108px"><path d="M4 7 L12 7 L8 11 Z" fill="#000"/><path d="M22.5 4.5 L30 12 M30 4.5 L22.5 12" stroke="#000" stroke-width="1.6" fill="none"/></svg>


  <div id="props" class="abs"></div>
  <div id="ptitle" class="abs"><span>Properties</span>
    <svg width="50" height="17" style="position:absolute;left:143px;top:0">
      <path d="M4 8 L12 8 L8 12 Z" fill="#000"/>
      <path d="M21.5 2.5 L21.5 9.5 M21 2.5 L26 2.5 M25.5 2 L25.5 10 M24.5 2 L24.5 10 M19 9.5 L28 9.5 M23.5 10 L23.5 14" stroke="#000" stroke-width="1" fill="none"/>
      <path d="M37.5 4.5 L45.5 12.5 M45.5 4.5 L37.5 12.5" stroke="#000" stroke-width="1.6" fill="none"/>
    </svg>
  </div>
  <div id="pcombo" class="abs"><span class="t"><b>ValidationSummary1</b>&nbsp; System.Web.UI.WebControls</span><div class="b"><svg width="11" height="18"><path d="M2 8 L9 8 L5.5 11.5 Z" fill="#000"/></svg></div></div>
  <div id="ptool" class="abs"><svg class="abs" style="left:0;top:0" width="192" height="24" viewBox="812 150 192 24">
<!-- categorized -->
<rect x="816.5" y="154.5" width="6" height="6" fill="#fff" stroke="#6C88C8" stroke-width="1"/><path d="M818 157.5 L821 157.5 M819.5 156 L819.5 159" stroke="#000" stroke-width="1"/>
<rect x="816.5" y="163.5" width="6" height="6" fill="#fff" stroke="#6C88C8" stroke-width="1"/><path d="M818 166.5 L821 166.5 M819.5 165 L819.5 168" stroke="#000" stroke-width="1"/>
<path d="M824 155.5 L828 155.5 M824 164.5 L828 164.5" stroke="#222" stroke-width="1"/>
<path d="M825 158.5 L832 158.5 M825 160.5 L832 160.5 M825 162.5 L832 162.5 M825 167.5 L832 167.5 M825 169.5 L832 169.5 M829 155.5 L832 155.5 M829 164.5 L832 164.5" stroke="#A8B4CC" stroke-width="1"/>
<!-- A-Z selected -->
<rect x="836.5" y="151.5" width="22" height="21" fill="#E1E6F0" stroke="#316AC5" stroke-width="1"/>
<text x="838.8" y="161.5" font-family="Liberation Serif" font-weight="bold" font-size="10.5" fill="#2A4CB4">A</text>
<text x="839" y="170.5" font-family="Liberation Serif" font-weight="bold" font-size="10.5" fill="#C23434">Z</text>
<path d="M851.5 154 L851.5 167" stroke="#000" stroke-width="1.2"/><path d="M849 164.5 L854 164.5 L851.5 168.8 Z" fill="#000"/>
<!-- sep -->
<rect x="862" y="154" width="1" height="17" fill="#C5C2B2"/><rect x="863" y="154" width="1" height="17" fill="#fff"/>
<!-- properties selected -->
<rect x="865.5" y="151.5" width="22" height="21" fill="#E1E6F0" stroke="#316AC5" stroke-width="1"/>
<rect x="870.5" y="157" width="11" height="9.5" fill="#fff" stroke="#1C2C68" stroke-width="1"/>
<rect x="870" y="166" width="12" height="1.2" fill="#1C2C68"/>
<path d="M872 159.5 L874 159.5 M872 161.5 L874 161.5 M872 163.5 L874 163.5" stroke="#000" stroke-width="1"/>
<path d="M875 159.5 L880 159.5 M875 161.5 L880 161.5 M875 163.5 L880 163.5" stroke="#333" stroke-width="1"/>
<!-- lightning -->
<path d="M900 156.2 L903.5 156.2 L899.5 160.6 L902.5 160.6 L895.2 168.2 L897.6 162.6 L894.6 162.6 Z" fill="#F8C830" stroke="#E08A18" stroke-width="0.7"/>
<!-- sep -->
<rect x="913" y="154" width="1" height="17" fill="#C5C2B2"/><rect x="914" y="154" width="1" height="17" fill="#fff"/>
<!-- property pages disabled -->
<rect x="920.5" y="154.5" width="15" height="13.5" fill="#DAD8CC" stroke="#B4B2A4" stroke-width="1"/>
<rect x="921" y="155" width="14" height="2.5" fill="#C2C0B2"/>
<rect x="923.5" y="159.5" width="10" height="6" fill="#E4E2D8" stroke="#B4B2A4" stroke-width="0.8"/>
<path d="M925 162.5 L926.5 162.5 M928 162.5 L932 162.5" stroke="#A8A698" stroke-width="1"/>
</svg>
</div>
  <div id="pgridb" class="abs"></div>
  <div id="pgrid" class="abs"><div class="gut"></div><div id="pvl"></div><div class="pr" style="top:1px"><div class="n">(Expressions)</div><div class="v"></div></div>
<div class="pr" style="top:18px"><div class="n" style="background:#ECE9D8">(ID)</div><div class="v"><b>ValidationSummary1</b></div></div>
<div class="pr" style="top:35px"><div class="n">AccessKey</div><div class="v"></div></div>
<div class="pr" style="top:52px"><div class="n">BackColor</div><div class="sw" style="background:#fff"></div></div>
<div class="pr" style="top:69px"><div class="n">BorderColor</div><div class="sw" style="background:#fff"></div></div>
<div class="pr" style="top:86px"><div class="n">BorderStyle</div><div class="v">NotSet</div></div>
<div class="pr" style="top:103px"><div class="n">BorderWidth</div><div class="v"></div></div>
<div class="pr" style="top:120px"><div class="n">CssClass</div><div class="v"></div></div>
<div class="pr" style="top:137px"><div class="n">DisplayMode</div><div class="v">BulletList</div></div>
<div class="pr" style="top:154px"><div class="n">EnableClientScript</div><div class="v">True</div></div>
<div class="pr" style="top:171px"><div class="n">Enabled</div><div class="v">True</div></div>
<div class="pr" style="top:188px"><div class="n">EnableTheming</div><div class="v">True</div></div>
<div class="pr" style="top:205px"><div class="n">EnableViewState</div><div class="v">True</div></div>
<div class="pr" style="top:222px"><div class="n">Font</div><div class="v"></div></div>
<div class="pr" style="top:239px"><div class="n">ForeColor</div><div class="sw" style="background:#FF0000"></div><div class="v" style="padding-left:28px">Red</div></div>
<div class="pr" style="top:256px"><div class="n">HeaderText</div><div class="v"></div></div>
<div class="pr" style="top:273px"><div class="n">Height</div><div class="v"></div></div>
<div class="pr" style="top:290px"><div class="n">ShowMessageBox</div><div class="v"><b>True</b></div></div>
<div class="pr" style="top:307px"><div class="n">ShowSummary</div><div class="v"><b>False</b></div></div>
<div class="pr" style="top:324px"><div class="n">SkinID</div><div class="v"></div></div>
<div class="pr" style="top:341px"><div class="n">TabIndex</div><div class="v">0</div></div>
<div class="pr" style="top:358px"><div class="n">ToolTip</div><div class="v"></div></div>
<div class="pr" style="top:375px"><div class="n">ValidationGroup</div><div class="v"></div></div>
<div class="pr" style="top:392px"><div class="n">Visible</div><div class="v">True</div></div>
<div style="position:absolute;left:2px;top:226px;width:9px;height:9px;border:1px solid #808080;background:#fff"><div style="position:absolute;left:1px;top:3px;width:5px;height:1px;background:#000"></div><div style="position:absolute;left:3px;top:1px;width:1px;height:5px;background:#000"></div></div>
    <div class="vtrack" style="left:178px;top:0;width:16px;height:408px"></div>
    <div class="sbtn" style="left:178px;top:1px"><svg width="13" height="13" viewBox="0 0 13 13"><path d="M3 8 L6.5 4.5 L10 8" stroke="#4D6185" stroke-width="2" fill="none"/></svg></div>
    <div class="thumb v" style="left:178px;top:18px;width:15px;height:344px"><!--GV2--></div>
    <div class="sbtn" style="left:178px;top:392px"><svg width="13" height="13" viewBox="0 0 13 13"><path d="M3 5 L6.5 8.5 L10 5" stroke="#4D6185" stroke-width="2" fill="none"/></svg></div>
  </div>
  <div id="pdesc" class="abs"><div style="position:absolute;left:4px;top:2px;font-family:'Liberation Serif',serif;font-weight:bold;font-size:13px;letter-spacing:0.3px">(ID)</div><div style="position:absolute;left:4px;top:19px">Programmatic name of the control.</div></div>
  <div id="ptabs" class="abs"></div>
  <div class="ptab" style="left:813px;width:44px"><span>So...</span></div>
  <div class="ptab act" style="left:859px;width:49px"><span>Pr...</span></div>
  <div class="ptab" style="left:909px;width:44px"><span>Se...</span></div>
  <div class="abs" style="left:954px;top:652px;width:1px;height:14px;background:#ACA899"></div>
  <div class="ptab" style="left:957px;width:44px"><span>Cl...</span></div>

  <!-- VS icon -->
  <svg class="abs" style="left:5px;top:10px" width="19" height="13" viewBox="5 10 19 13">
    <path d="M6.2 16 L9.5 11.3 L13 11.3 L14 12.8 L15 11.3 L18.5 11.3 L21.8 16 L18.5 20.7 L15 20.7 L14 19.2 L13 20.7 L9.5 20.7 Z" fill="#7DB92E"/>
    <path d="M9 16 L10.8 13.6 L12.6 16 L10.8 18.4 Z" fill="#1E5AE0"/><path d="M15.4 16 L17.2 13.6 L19 16 L17.2 18.4 Z" fill="#1E5AE0"/>
    <path d="M10 11.3 L13.2 11.3 L18.2 20.7 L15 20.7 Z" fill="#F6C21C"/>
    <path d="M15.2 11.3 L18.4 11.3 L13 20.7 L9.8 20.7 Z" fill="#E8481C"/>
  </svg>
  <!-- title buttons -->
  <svg class="abs" style="left:886px;top:4px" width="122" height="25" viewBox="886 4 122 25">
    <defs>
      <linearGradient id="tbb" x1="0" y1="0" x2="1" y2="1"><stop offset="0" stop-color="#6C9CF8"/><stop offset="0.35" stop-color="#3A78F0"/><stop offset="0.65" stop-color="#2458D8"/><stop offset="1" stop-color="#3C7CF4"/></linearGradient>
      <linearGradient id="tbr" x1="0" y1="0" x2="1" y2="1"><stop offset="0" stop-color="#F0A080"/><stop offset="0.35" stop-color="#E05428"/><stop offset="0.7" stop-color="#C83C18"/><stop offset="1" stop-color="#D85030"/></linearGradient>
    </defs>
    <g stroke="#fff" stroke-width="1">
      <rect x="888.5" y="6.5" width="20" height="20" rx="3" fill="url(#tbb)"/>
      <rect x="911.5" y="6.5" width="20" height="20" rx="3" fill="url(#tbb)"/>
      <rect x="938.5" y="6.5" width="20" height="20" rx="3" fill="url(#tbb)"/>
      <rect x="961.5" y="6.5" width="20" height="20" rx="3" fill="url(#tbb)"/>
      <rect x="984.5" y="6.5" width="20" height="20" rx="3" fill="url(#tbr)"/>
    </g>
    <path d="M897 12.5 L897 20.5 L893 16.5 Z M900 12.5 L900 20.5 L904 16.5 Z" fill="#fff"/>
    <path d="M925 14 L925 11.8 L916.5 11.8 L916.5 21 L925 21 L925 19" stroke="#fff" stroke-width="1.6" fill="none"/><rect x="916" y="11" width="9.8" height="2.4" fill="#fff"/>
    <path d="M920.5 16.5 L926 16.5" stroke="#fff" stroke-width="1.6"/><path d="M925 13.5 L928.5 16.5 L925 19.5 Z" fill="#fff"/>
    <rect x="943" y="19" width="7.5" height="3" fill="#fff"/>
    <rect x="966.5" y="12" width="9.5" height="9" fill="none" stroke="#fff" stroke-width="1.4"/><rect x="966" y="10.5" width="10.5" height="3" fill="#fff"/>
    <path d="M990 11.5 L999.5 21 M999.5 11.5 L990 21" stroke="#fff" stroke-width="2.4" stroke-linecap="round"/>
  </svg>
  <!-- window corners -->
  <svg class="abs" style="left:0;top:0" width="6" height="6"><path d="M0 0 L5 0 Q1 1 0 5 Z" fill="#ECE9D8"/></svg>
  <svg class="abs" style="left:1005px;top:0" width="6" height="6"><path d="M6 0 L1 0 Q5 1 6 5 Z" fill="#ECE9D8"/></svg>
  <!-- scroll grips -->
  <svg class="abs" style="left:790px;top:474px" width="8" height="9"><path d="M0 0.5 H7 M0 2.5 H7 M0 4.5 H7 M0 6.5 H7" stroke="#EEF3FE" stroke-width="1"/><path d="M1 1.5 H8 M1 3.5 H8 M1 5.5 H8 M1 7.5 H8" stroke="#8CA4DC" stroke-width="1"/></svg>
  <svg class="abs" style="left:994px;top:360px" width="8" height="9"><path d="M0 0.5 H7 M0 2.5 H7 M0 4.5 H7 M0 6.5 H7" stroke="#EEF3FE" stroke-width="1"/><path d="M1 1.5 H8 M1 3.5 H8 M1 5.5 H8 M1 7.5 H8" stroke="#8CA4DC" stroke-width="1"/></svg>
  <svg class="abs" style="left:398px;top:631px" width="9" height="8"><path d="M0.5 0 V7 M2.5 0 V7 M4.5 0 V7 M6.5 0 V7" stroke="#EEF3FE" stroke-width="1"/><path d="M1.5 1 V8 M3.5 1 V8 M5.5 1 V8 M7.5 1 V8" stroke="#8CA4DC" stroke-width="1"/></svg>
  <!-- design/source icons -->
  <svg class="abs" style="left:36px;top:650px" width="16" height="15" viewBox="36 650 16 15"><rect x="38.5" y="653.5" width="7" height="7" fill="#fff" stroke="#7C8CB0" stroke-width="1"/><path d="M43.2 657.6 L46.8 659 L46.2 660.5 L47 662 L45.2 662.6 L44.4 661.2 L43 661.8 Z" fill="#333"/></svg>
  <svg class="abs" style="left:102px;top:652px" width="12" height="11" viewBox="102 652 12 11"><rect x="103.5" y="653.5" width="8" height="8" fill="#fff" stroke="#7C8CB0" stroke-width="1"/><path d="M106.8 656 L105.3 657.5 L106.8 659 M108.2 656 L109.7 657.5 L108.2 659" stroke="#222" stroke-width="0.9" fill="none"/></svg>
  <svg class="abs" style="left:186px;top:648px" width="10" height="19"><path d="M6.5 5.5 L6.5 13.5 L2.5 9.5 Z" fill="#ACA899"/></svg>
  <svg class="abs" style="left:783px;top:648px" width="11" height="19"><path d="M4 5.5 L4 13.5 L8 9.5 Z" fill="#ACA899"/></svg>
  <!-- bottom tab icons -->
  <svg class="abs" style="left:31px;top:674px" width="17" height="18" viewBox="31 674 17 18">
    <rect x="33.5" y="676.5" width="10" height="12" fill="#F4F2EA" stroke="#8A8878" stroke-width="1"/><rect x="36" y="675" width="5" height="3" fill="#E8C860" stroke="#8A7A40" stroke-width="0.7"/>
    <circle cx="42.5" cy="686.5" r="4.2" fill="#E83420"/><path d="M40.6 684.6 L44.4 688.4 M44.4 684.6 L40.6 688.4" stroke="#fff" stroke-width="1.4"/>
  </svg>
  <svg class="abs" style="left:99px;top:675px" width="15" height="15" viewBox="99 675 15 15">
    <rect x="100.5" y="677.5" width="12" height="11" fill="#fff" stroke="#3A5CB8" stroke-width="1"/><rect x="100" y="677" width="13" height="2.5" fill="#3A6CD8"/>
    <path d="M103 681.5 H110 M103 683.5 H109 M103 685.5 H110" stroke="#3A5CB8" stroke-width="1"/>
  </svg>
  <svg class="abs" style="left:156px;top:675px" width="17" height="17" viewBox="156 675 17 17">
    <rect x="157.5" y="676.5" width="12" height="9" fill="#fff" stroke="#3A5CB8" stroke-width="1"/><rect x="157" y="676" width="13" height="2.5" fill="#3A6CD8"/>
    <path d="M160 680.5 H167 M160 682.5 H165" stroke="#3A5CB8" stroke-width="1"/>
    <path d="M163 690.5 L164.3 684 L166.3 684 L166.6 687 L167.8 687 L168.1 684 L170.1 684 L171.6 690.5 L168.2 691.3 L167.7 689 L166.7 689 L166.2 691.3 Z" fill="#181818"/>
  </svg>
  <!-- props tab icons -->
  <svg class="abs" style="left:812px;top:650px" width="18" height="18" viewBox="812 650 18 18">
    <rect x="818.5" y="652.5" width="9" height="9" fill="#fff" stroke="#3A5CB8" stroke-width="1"/><rect x="818" y="652" width="10" height="2.5" fill="#3A6CD8"/>
    <path d="M813 661.5 L813 655.5 L816 655.5 L817 656.5 L820.5 656.5 L820.5 661.5 Z" fill="#F4CC58" stroke="#9A7A28" stroke-width="0.8"/>
    <circle cx="822.3" cy="661" r="3.4" fill="#D8E6FA" stroke="#8AA0D0" stroke-width="1"/><path d="M824.8 663.8 L828 667" stroke="#D89A20" stroke-width="1.8"/>
  </svg>
  <svg class="abs" style="left:860px;top:650px" width="18" height="18" viewBox="860 650 18 18">
    <rect x="861.5" y="656.5" width="11" height="10" fill="#fff" stroke="#5A6EA8" stroke-width="1"/><rect x="861" y="656" width="12" height="2.2" fill="#7A8EC8"/>
    <path d="M863.5 660.5 H865 M866.5 660.5 H870.5 M863.5 662.5 H865 M866.5 662.5 H870.5 M863.5 664.5 H865 M866.5 664.5 H870.5" stroke="#444" stroke-width="1"/>
    <path d="M866 656 L871 651.5 L877 653.5 L876 657.5 L872 658 L869.5 657 Z" fill="#E8C050" stroke="#8A6A20" stroke-width="0.8"/><path d="M874.5 652.5 L877 653.5 L876.5 656" stroke="#2E8A2E" stroke-width="1.2" fill="none"/>
  </svg>
  <svg class="abs" style="left:908px;top:650px" width="18" height="18" viewBox="908 650 18 18">
    <rect x="911.500" y="651.5" width="8" height="6.5" fill="#3A7AE8" stroke="#2A4AA0" stroke-width="1"/>
    <rect x="909.5" y="658.5" width="7" height="3" fill="#D8DCE8" stroke="#7A84A0" stroke-width="0.8"/>
    <rect x="915.5" y="655.5" width="9" height="7" fill="#4A8AF0" stroke="#2A4AA0" stroke-width="1"/>
    <rect x="914.5" y="663.5" width="10" height="3.5" fill="#D8DCE8" stroke="#7A84A0" stroke-width="0.8"/><rect x="921" y="664.7" width="2" height="1.2" fill="#2E9A2E"/>
  </svg>
  <svg class="abs" style="left:956px;top:650px" width="18" height="18" viewBox="956 650 18 18">
    <rect x="957.5" y="652.5" width="12" height="9.5" fill="#fff" stroke="#4A5A8A" stroke-width="1"/>
    <path d="M958.5 657 L962.5 653.5 L966.5 656 L962.5 660 Z" fill="#F0C030" stroke="#8A6A20" stroke-width="0.8"/>
    <path d="M970.5 653.8 L973 656.5 L970.5 659.2 L968 656.5 Z" fill="#D868C8" stroke="#8A3A88" stroke-width="0.6"/>
    <path d="M968.5 661.3 L971.5 664 L968.5 666.8 L965.5 664 Z" fill="#4A78E0" stroke="#2A4AA0" stroke-width="0.6"/>
  </svg>
  <!-- status grip -->
  <svg class="abs" style="left:994px;top:703px" width="12" height="12"><g fill="#B8B5A4"><rect x="8" y="0" width="2" height="2"/><rect x="4" y="4" width="2" height="2"/><rect x="8" y="4" width="2" height="2"/><rect x="0" y="8" width="2" height="2"/><rect x="4" y="8" width="2" height="2"/><rect x="8" y="8" width="2" height="2"/></g><g fill="#fff"><rect x="9" y="1" width="2" height="2"/><rect x="5" y="5" width="2" height="2"/><rect x="9" y="5" width="2" height="2"/><rect x="1" y="9" width="2" height="2"/><rect x="5" y="9" width="2" height="2"/><rect x="9" y="9" width="2" height="2"/></g><g fill="#B8B5A4"><rect x="8" y="0" width="1.5" height="1.5"/><rect x="4" y="4" width="1.5" height="1.5"/><rect x="8" y="4" width="1.5" height="1.5"/><rect x="0" y="8" width="1.5" height="1.5"/><rect x="4" y="8" width="1.5" height="1.5"/><rect x="8" y="8" width="1.5" height="1.5"/></g></svg>

  <div id="bl" class="abs"></div>
  <div id="br" class="abs"></div>
  <div id="bb" class="abs"></div>
</div>
</body>
</html>
